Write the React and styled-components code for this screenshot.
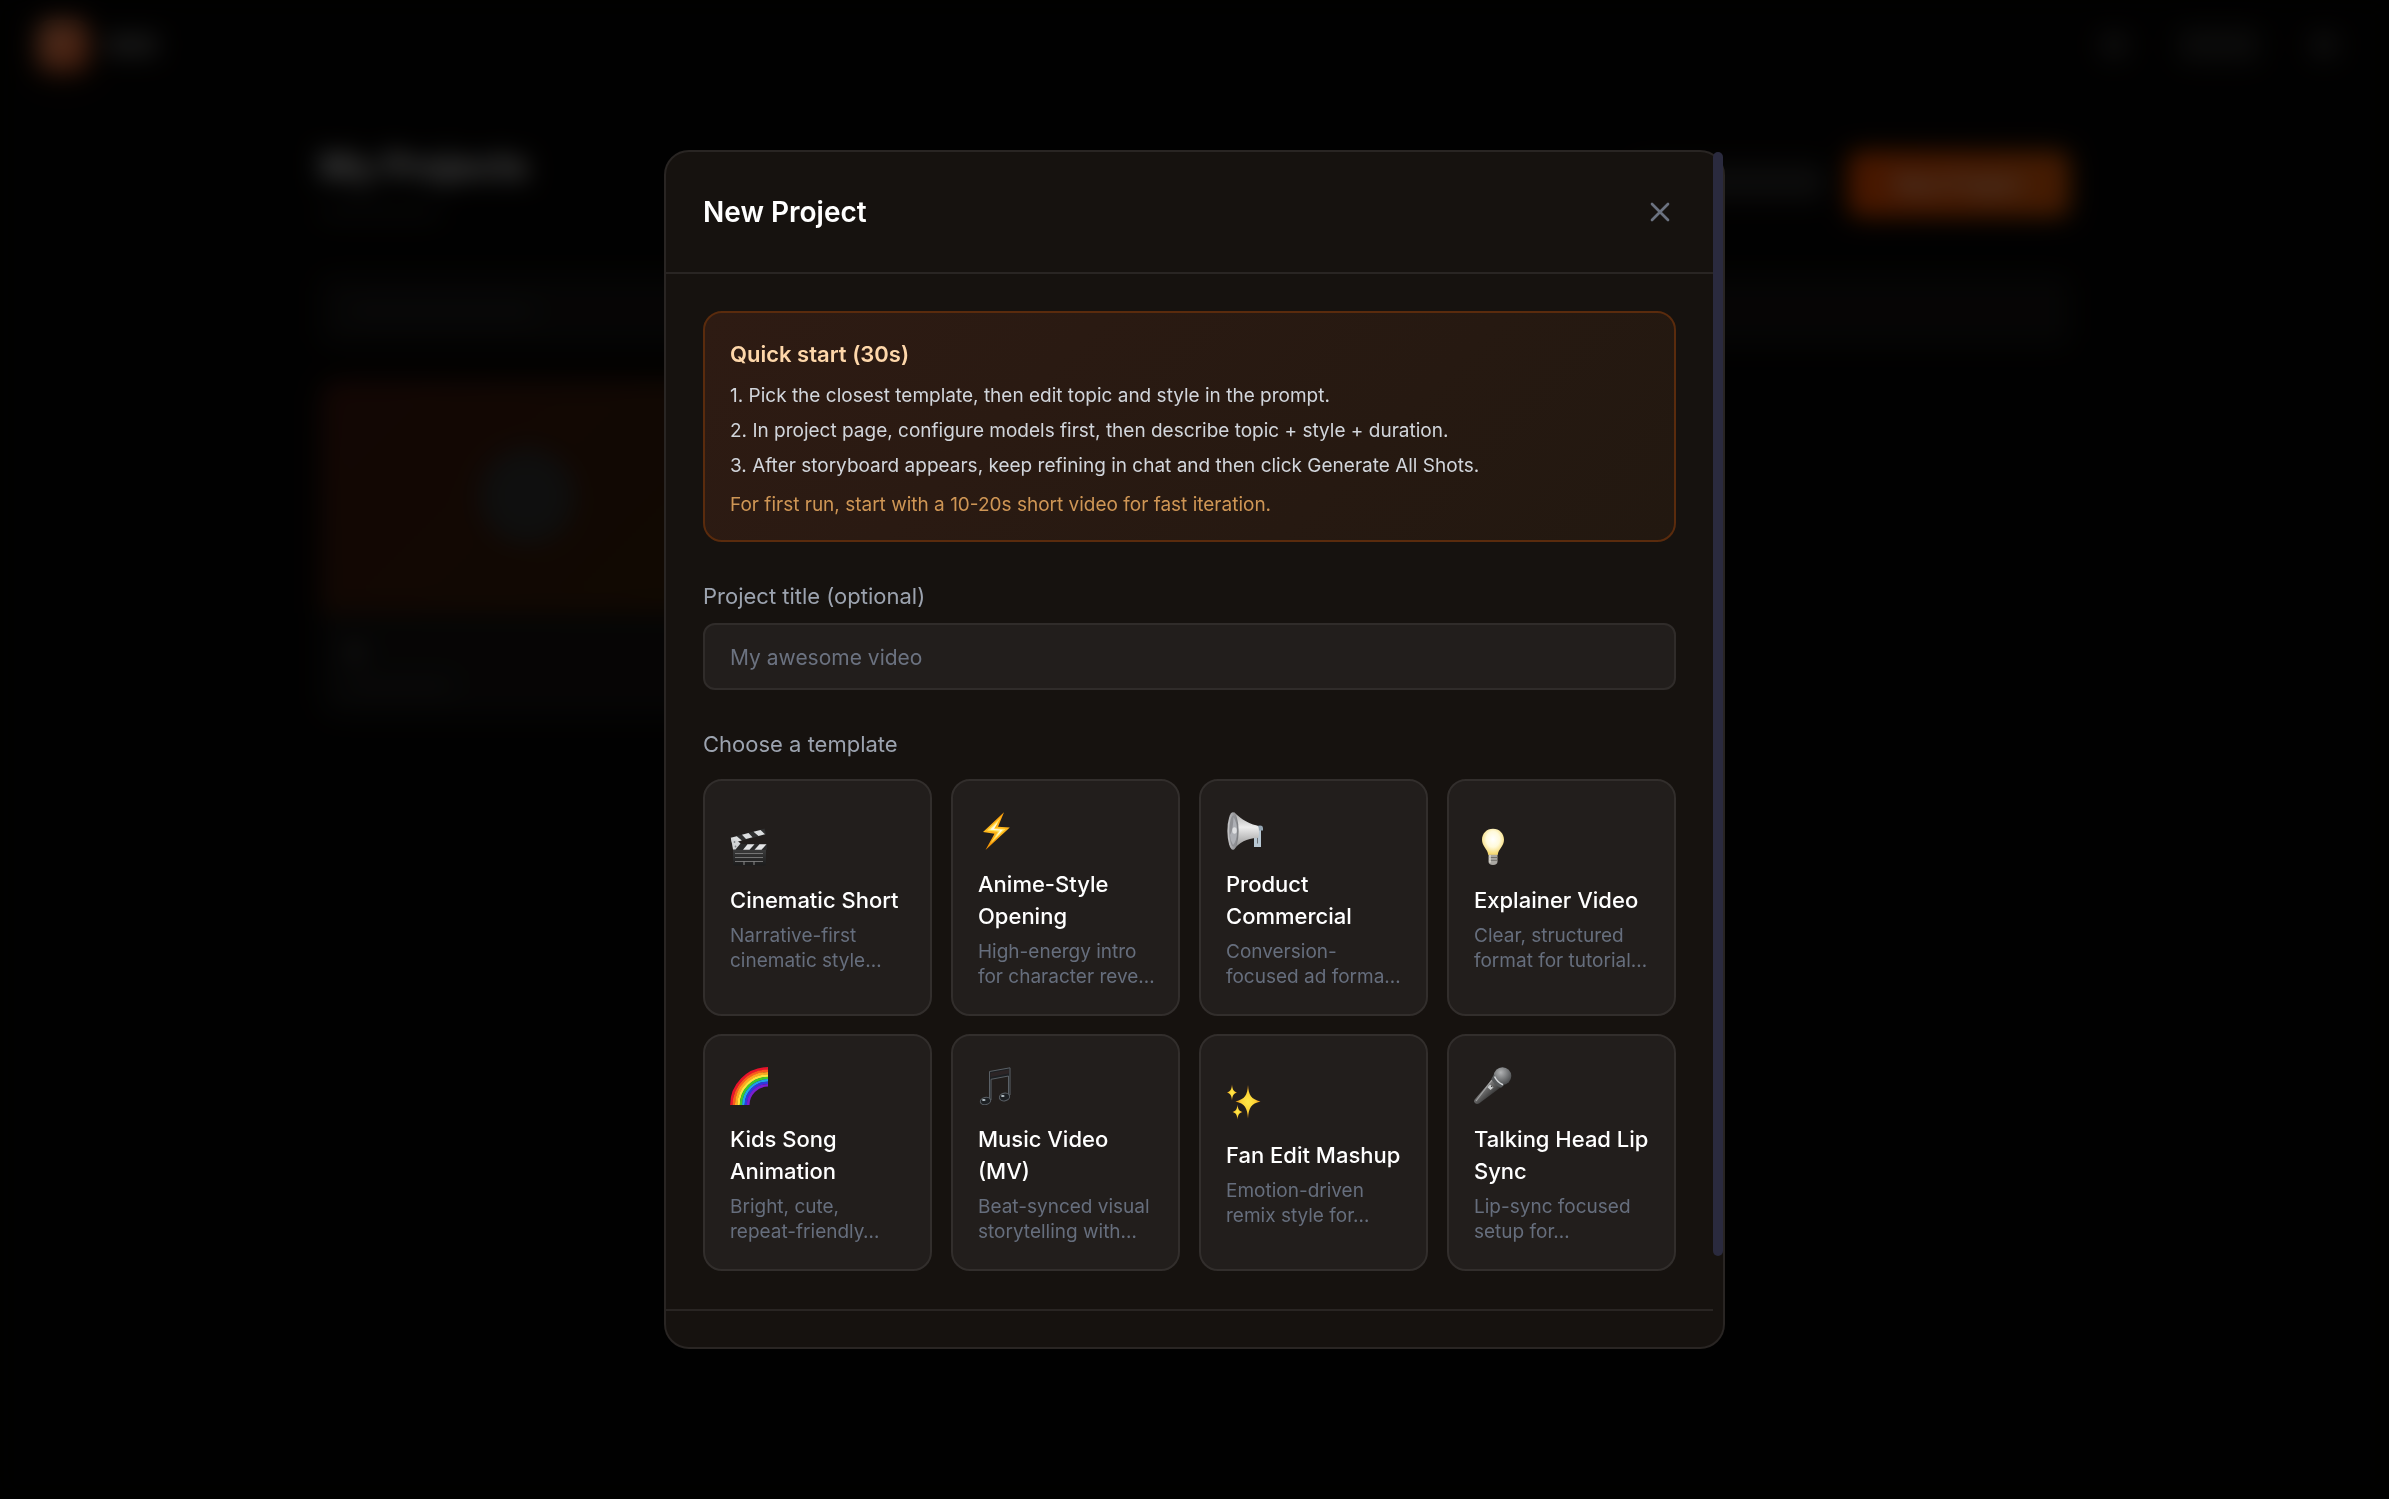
import React, { useState } from "react";
import styled, { createGlobalStyle } from "styled-components";

const GlobalStyle = createGlobalStyle`
  * { box-sizing: border-box; }
  html, body { margin: 0; height: 100%; background: #0c0a09; overflow: hidden; }
  body, button, input { font-family: Inter, "Liberation Sans", sans-serif; }
  h1, h2, h3, p, ol { margin: 0; padding: 0; }
`;

/* ---------- page behind the dialog ---------- */

const Page = styled.div`
  min-height: 100vh;
  background: #060504;
  color: #fff;
`;

const TopBar = styled.header`
  display: flex;
  align-items: center;
  justify-content: space-between;
  height: 90px;
  padding: 0 52px 0 38px;
`;

const Cluster = styled.div`
  display: flex;
  align-items: center;
  gap: ${(p) => p.$gap}px;
`;

const LogoMark = styled.div`
  width: 50px;
  height: 50px;
  border-radius: 12px;
  background: linear-gradient(135deg, #ff9a68, #e8602a);
  box-shadow: 0 6px 20px rgba(234, 88, 12, 0.3);
`;

const Bar = styled.div`
  width: ${(p) => p.$w}px;
  height: ${(p) => p.$h}px;
  border-radius: 8px;
  background: rgba(255, 255, 255, ${(p) => p.$a});
`;

const Main = styled.main`
  max-width: 1826px;
  margin: 0 auto;
  padding: 54px 38px;
`;

const TitleRow = styled.div`
  display: flex;
  align-items: center;
  justify-content: space-between;
  margin-bottom: 56px;
`;

const TitleBlock = styled.div`
  display: flex;
  flex-direction: column;
  gap: 16px;
`;

const PageTitle = styled.h1`
  font-size: 36px;
  line-height: 44px;
  font-weight: 700;
`;

const PrimaryAction = styled.button`
  height: 66px;
  width: 222px;
  margin-top: 4px;
  border: 0;
  border-radius: 12px;
  background: linear-gradient(90deg, #f04e00, #e25c08);
  color: #fff;
  font-size: 22px;
  font-weight: 500;
`;

const SearchBar = styled.div`
  display: flex;
  align-items: center;
  height: 70px;
  padding: 0 26px;
  margin-bottom: 34px;
  border-radius: 12px;
  background: rgba(255, 255, 255, 0.06);
`;

const ProjectCard = styled.article`
  width: 414px;
  border-radius: 19px;
  overflow: hidden;
  background: rgba(255, 255, 255, 0.06);
`;

const Thumb = styled.div`
  display: grid;
  place-items: center;
  aspect-ratio: 16 / 9;
  background: linear-gradient(135deg, #3f170f, #382007);
`;

const PlayBadge = styled.div`
  width: 96px;
  height: 96px;
  border-radius: 50%;
  background: rgba(50, 54, 54, 0.9);
`;

const CardMeta = styled.div`
  display: flex;
  flex-direction: column;
  gap: 14px;
  padding: 28px 25px 22px;
`;

/* ---------- dialog ---------- */

const Overlay = styled.div`
  position: fixed;
  inset: 0;
  display: flex;
  align-items: center;
  justify-content: center;
  padding: 25px;
  background: rgba(0, 0, 0, 0.7);
  backdrop-filter: blur(12px);
`;

const Dialog = styled.section`
  display: flex;
  width: 100%;
  max-width: 1061px;
  max-height: 80vh;
  border: 2px solid #292523;
  border-radius: 25px;
  background: #16120f;
  color: #fff;
`;

const ScrollArea = styled.div`
  flex: 1;
  min-width: 0;
  overflow-y: auto;
  scrollbar-width: none;
  border-radius: 23px 0 0 23px;
`;

const ScrollRail = styled.div`
  flex: none;
  width: 10px;
`;

const ScrollThumb = styled.div`
  height: 92.4%;
  border-radius: 5px;
  background: #2a2a3e;
`;

const DialogHead = styled.header`
  display: flex;
  align-items: center;
  justify-content: space-between;
  height: 122px;
  padding: 0 37px;
  border-bottom: 2px solid #292523;
`;

const DialogTitle = styled.h2`
  font-size: 28px;
  line-height: 44px;
  font-weight: 600;
`;

const CloseButton = styled.button`
  display: flex;
  padding: 0;
  border: 0;
  background: none;
  color: #6b7280;
  cursor: pointer;
`;

const DialogBody = styled.div`
  display: flex;
  flex-direction: column;
  gap: 38px;
  padding: 37px 37px 38px;
`;

const QuickStart = styled.section`
  padding: 25px 25px 23px;
  border: 2px solid #5a2b0d;
  border-radius: 19px;
  background: linear-gradient(135deg, #2e1b13, #221810);
`;

const QuickTitle = styled.h3`
  margin-bottom: 8px;
  font-size: 22px;
  line-height: 32px;
  font-weight: 600;
  color: #fed7aa;
`;

const QuickList = styled.ol`
  list-style: none;
  margin-bottom: 10px;
  font-size: 19px;
  line-height: 35px;
  color: #d1d5db;
`;

const QuickTip = styled.p`
  font-size: 19px;
  line-height: 24px;
  color: #cf9655;
`;

const Field = styled.div`
  display: flex;
  flex-direction: column;
  gap: ${(p) => p.$gap}px;
`;

const Label = styled.label`
  font-size: 22px;
  line-height: 32px;
  color: #9ca3af;
`;

const TextInput = styled.input`
  width: 100%;
  height: 67px;
  padding: 2px 25px 0;
  border: 2px solid #302c2a;
  border-radius: 12px;
  outline: none;
  background: #221e1c;
  color: #fff;
  font-size: 21px;
  &::placeholder { color: #6b7280; opacity: 1; }
`;

const Grid = styled.div`
  display: grid;
  grid-template-columns: repeat(4, minmax(0, 1fr));
  gap: 18px 19px;
`;

const Card = styled.button`
  display: flex;
  flex-direction: column;
  justify-content: center;
  min-height: 237px;
  padding: 25px;
  border: 2px solid #322e2c;
  border-radius: 19px;
  background: #221e1c;
  text-align: left;
  white-space: pre;
  cursor: pointer;
`;

const CardIcon = styled.svg`
  width: 38px;
  height: 38px;
  margin: 6px 0 18px;
`;

const CardTitle = styled.span`
  margin-bottom: 7px;
  font-size: 22px;
  line-height: 32px;
  font-weight: 500;
  color: #fff;
`;

const CardText = styled.span`
  font-size: 19px;
  line-height: 25px;
  color: #666e7d;
`;

const DialogFoot = styled.footer`
  height: 138px;
  border-top: 2px solid #292523;
`;

/* ---------- icons ---------- */

const CloseIcon = () => (
  <svg width="32" height="32" viewBox="0 0 24 24" fill="none" stroke="currentColor" strokeWidth="2" strokeLinecap="round" aria-hidden="true">
    <path d="M18 6 6 18M6 6l12 12" />
  </svg>
);

const Clapper = () => (
  <CardIcon viewBox="0 0 38 38" aria-hidden="true">
    <defs>
      <linearGradient id="clapBody" x1="0" y1="0" x2="0" y2="1">
        <stop offset="0" stopColor="#3e3e3e" />
        <stop offset="1" stopColor="#1b1b1b" />
      </linearGradient>
    </defs>
    <rect x="3" y="20" width="33" height="17.500" rx="1.500" fill="url(#clapBody)" />
    <path d="M5 25.500h28M5 29.500h28M5 33.500h28" stroke="#747474" strokeWidth="1.100" />
    <path d="M14 33.500V37M24 33.500V37" stroke="#8a8a8a" strokeWidth="1" />
    <path d="M.5 9.500 34.500.5l1.500 6L2 15z" fill="#303030" />
    <path d="M.8 9.800l6-1.600 5 4.300-9.800 2.500zM12 6.800l6.500-1.700 4 4.200-6.500 1.700zM23.500 3.800l7-1.800 4.500 4.300-6.500 1.700z" fill="#dcdedf" />
    <path d="M3 16h34v5.800H3z" fill="#2a2a2a" />
    <path d="M17.500 16.200h7l-5 5.500H13zM29.500 16.200h7l-5 5.500h-7z" fill="#e3e4e5" />
    <path d="M1 10l6 2.500 3.500 3-5 6H3z" fill="#d2d4d5" />
    <circle cx="4.500" cy="14" r=".9" fill="#808486" />
    <circle cx="5.500" cy="18.500" r=".9" fill="#808486" />
  </CardIcon>
);

const Bolt = () => (
  <CardIcon viewBox="0 0 38 38" aria-hidden="true">
    <defs>
      <linearGradient id="boltEdge" x1="0" y1="0" x2="0" y2="1">
        <stop offset="0" stopColor="#ff9f0a" />
        <stop offset=".5" stopColor="#ffb81c" />
        <stop offset="1" stopColor="#f08c00" />
      </linearGradient>
    </defs>
    <path d="M26 .3 5 20l11.500 1.800L7.500 38 31.800 15.500 20 14.800z" fill="url(#boltEdge)" />
    <path d="M22.800 5.500 9 18.500l11 1.300-7.300 11.500L27.500 17l-11-.7z" fill="#ffe45c" />
    <path d="M20 10 12 17.800l10 .8-4.500 7 7.500-7.800-9-.8z" fill="#fffbe0" />
  </CardIcon>
);

const Megaphone = () => (
  <CardIcon viewBox="0 0 38 38" aria-hidden="true">
    <defs>
      <linearGradient id="hornBody" x1="0" y1="0" x2="0" y2="1">
        <stop offset="0" stopColor="#a9a9a9" />
        <stop offset=".4" stopColor="#ededed" />
        <stop offset="1" stopColor="#8b8b8b" />
      </linearGradient>
      <linearGradient id="hornMouth" x1="0" y1="0" x2="1" y2="0">
        <stop offset="0" stopColor="#c9c9cb" />
        <stop offset="1" stopColor="#77787c" />
      </linearGradient>
    </defs>
    <path d="M28 24.500v10.500h7V17h-3.500v14.500H31V24" fill="#b9c8d4" />
    <path d="M29.500 14.500q7-2.500 7.500 1v3h-7z" fill="#94a5b2" />
    <path d="M8 .3C12 4 20 11.500 31 13.500q2 0 2 6.500t-2 6c-10 0-18 5-23.500 11.500z" fill="url(#hornBody)" />
    <ellipse cx="7" cy="19" rx="5.600" ry="18.700" fill="url(#hornMouth)" />
    <ellipse cx="7.300" cy="19" rx="4" ry="15.500" fill="#8f9094" />
    <path d="M7.500 5q3.800 6 3.500 15t-4 13q-3-5-3-10 3-4 3.500-18z" fill="#aeb0b5" />
    <ellipse cx="8.500" cy="18.500" rx="2.200" ry="3.200" fill="#dfe0e2" />
  </CardIcon>
);

const Bulb = () => (
  <CardIcon viewBox="0 0 38 38" aria-hidden="true">
    <defs>
      <radialGradient id="bulbGlow" cx=".5" cy=".4" r=".6">
        <stop offset="0" stopColor="#ffffff" />
        <stop offset=".5" stopColor="#fffadb" />
        <stop offset="1" stopColor="#f5d565" />
      </radialGradient>
    </defs>
    <path d="M19 .8C12.500.8 8 5.600 8 11.800c0 6.500 5.500 9 6.300 15.200h9.400C24.500 20.800 30 18.300 30 11.800 30 5.600 25.500.8 19 .8z" fill="url(#bulbGlow)" />
    <path d="M14.500 26.800h9v7q0 3-4.500 3.200-4.500-.2-4.500-3.200z" fill="#aaa8a2" />
    <path d="M14.500 29.500h9M14.500 32.300h9" stroke="#716f69" strokeWidth="1" />
    <path d="M16 27v7.500" stroke="#dddad2" strokeWidth="1.500" />
  </CardIcon>
);

const rainbowBands = ["#e8132b", "#fb5a1d", "#ffa51f", "#ffe23a", "#3fc92b", "#1fa4e8", "#3038e0", "#7a1fd0"];
const Rainbow = () => (
  <CardIcon viewBox="0 0 38 38" aria-hidden="true">
    {rainbowBands.map((color, i) => {
      const r = 36.6 - i * 2.4;
      return <path key={color} d={`M${38 - r} 38A${r} ${r} 0 0 1 38 ${38 - r}`} fill="none" stroke={color} strokeWidth="2.600" />;
    })}
  </CardIcon>
);

const Notes = () => (
  <CardIcon viewBox="0 0 38 38" aria-hidden="true">
    <g fill="#1d2023" stroke="#5a6066" strokeWidth="1">
      <path d="M11.500 4.500 32 .8V28h-1.500V9L13 12.300V33h-1.500z" />
      <ellipse cx="7.500" cy="34" rx="5.200" ry="3.600" transform="rotate(-12 7.500 34)" />
      <ellipse cx="26.500" cy="30" rx="5.200" ry="3.800" transform="rotate(-12 26.500 30)" />
    </g>
    <path d="M12.500 6 31 2.500v4L12.500 10z" fill="#2c2425" />
    <ellipse cx="5.800" cy="33" rx="1.800" ry="1" fill="#b9c3c9" />
    <ellipse cx="24.800" cy="29" rx="1.800" ry="1" fill="#b9c3c9" />
  </CardIcon>
);

const Sparkles = () => (
  <CardIcon viewBox="0 0 38 38" aria-hidden="true">
    <defs>
      <radialGradient id="sparkFill">
        <stop offset="0" stopColor="#ffe94a" />
        <stop offset=".55" stopColor="#fdd335" />
        <stop offset="1" stopColor="#e58a14" />
      </radialGradient>
    </defs>
    <g fill="url(#sparkFill)">
      <path d="M22 2c.8 10.500 3 14 12.500 16.500-9.500 2.300-11.700 6-12.500 17-.8-11-3-14.700-12.500-17 9.500-2.500 11.700-6 12.500-16.500z" />
      <path d="M6 1.500c.5 5 1.500 7 5 8-3.500 1-4.500 3-5 8-.5-5-1.500-7-5-8 3.500-1 4.500-3 5-8z" />
      <path d="M11.500 21.500c.5 4.800 1.500 6.500 5 7.500-3.500 1-4.500 2.700-5 7.500-.5-4.800-1.500-6.500-5-7.500 3.500-1 4.500-2.700 5-7.500z" />
    </g>
  </CardIcon>
);

const Microphone = () => (
  <CardIcon viewBox="0 0 38 38" aria-hidden="true">
    <defs>
      <linearGradient id="micHandle" x1="0" y1="0" x2="1" y2="1">
        <stop offset=".3" stopColor="#8b8b8b" />
        <stop offset=".7" stopColor="#2f2f2f" />
      </linearGradient>
      <radialGradient id="micHead" cx=".4" cy=".3" r=".7">
        <stop offset="0" stopColor="#b0b2b3" />
        <stop offset="1" stopColor="#4a4c4e" />
      </radialGradient>
    </defs>
    <path d="M18 12.500 26.500 20.500 5 36.500q-2.500 1-4-.5t-.3-3.500z" fill="url(#micHandle)" />
    <path d="M18 12.800 2 34" stroke="#a0a0a0" strokeWidth="1.200" />
    <circle cx="28.500" cy="9" r="8.800" fill="url(#micHead)" />
    <path d="M20 7.500q2 7 10.500 10.300l-3.500 3q-8-3-9.500-9.300z" fill="#55585a" />
    <path d="M20.500 9.500q2.500 5.500 8.500 8.300" stroke="#d5d8da" strokeWidth="1.600" fill="none" />
    <path d="M16 17.500l3.500 3-3 2.500-3-2.800z" fill="#c9cccd" />
    <path d="M17 19l1.300 1.100" stroke="#333" strokeWidth="1" />
  </CardIcon>
);

/* ---------- data ---------- */

const steps = [
  "1. Pick the closest template, then edit topic and style in the prompt.",
  "2. In project page, configure models first, then describe topic + style + duration.",
  "3. After storyboard appears, keep refining in chat and then click Generate All Shots.",
];

const templates = [
  { Icon: Clapper, title: "Cinematic Short", text: "Narrative-first\ncinematic style…" },
  { Icon: Bolt, title: "Anime-Style\nOpening", text: "High-energy intro\nfor character reve…" },
  { Icon: Megaphone, title: "Product\nCommercial", text: "Conversion-\nfocused ad forma…" },
  { Icon: Bulb, title: "Explainer Video", text: "Clear, structured\nformat for tutorial…" },
  { Icon: Rainbow, title: "Kids Song\nAnimation", text: "Bright, cute,\nrepeat-friendly…" },
  { Icon: Notes, title: "Music Video\n(MV)", text: "Beat-synced visual\nstorytelling with…" },
  { Icon: Sparkles, title: "Fan Edit Mashup", text: "Emotion-driven\nremix style for…" },
  { Icon: Microphone, title: "Talking Head Lip\nSync", text: "Lip-sync focused\nsetup for…" },
];

function ProjectsPage() {
  return (
    <Page aria-hidden="true">
      <TopBar>
        <Cluster $gap={16}>
          <LogoMark />
          <Bar $w={54} $h={22} $a={0.3} />
        </Cluster>
        <Cluster $gap={52}>
          <Bar $w={26} $h={26} $a={0.18} />
          <Bar $w={80} $h={34} $a={0.13} />
          <Bar $w={26} $h={26} $a={0.18} />
        </Cluster>
      </TopBar>
      <Main>
        <TitleRow>
          <TitleBlock>
            <PageTitle>My Projects</PageTitle>
            <Bar $w={120} $h={16} $a={0.08} />
          </TitleBlock>
          <Cluster $gap={24}>
            <Bar $w={190} $h={36} $a={0.14} />
            <PrimaryAction type="button" tabIndex={-1}>New Project</PrimaryAction>
          </Cluster>
        </TitleRow>
        <SearchBar>
          <Bar $w={190} $h={18} $a={0.06} />
        </SearchBar>
        <ProjectCard>
          <Thumb>
            <PlayBadge />
          </Thumb>
          <CardMeta>
            <Bar $w={20} $h={22} $a={0.15} />
            <Bar $w={110} $h={18} $a={0.06} />
          </CardMeta>
        </ProjectCard>
      </Main>
    </Page>
  );
}

export default function App() {
  const [title, setTitle] = useState("");
  return (
    <>
      <GlobalStyle />
      <ProjectsPage />
      <Overlay>
        <Dialog role="dialog" aria-modal="true" aria-labelledby="dialog-title">
          <ScrollArea>
            <DialogHead>
              <DialogTitle id="dialog-title">New Project</DialogTitle>
              <CloseButton type="button" aria-label="Close">
                <CloseIcon />
              </CloseButton>
            </DialogHead>
            <DialogBody>
              <QuickStart>
                <QuickTitle>Quick start (30s)</QuickTitle>
                <QuickList>
                  {steps.map((step) => (
                    <li key={step}>{step}</li>
                  ))}
                </QuickList>
                <QuickTip>For first run, start with a 10-20s short video for fast iteration.</QuickTip>
              </QuickStart>
              <Field $gap={11}>
                <Label htmlFor="project-title">Project title (optional)</Label>
                <TextInput
                  id="project-title"
                  placeholder="My awesome video"
                  value={title}
                  onChange={(e) => setTitle(e.target.value)}
                />
              </Field>
              <Field $gap={19}>
                <Label as="span" id="template-label">Choose a template</Label>
                <Grid role="group" aria-labelledby="template-label">
                  {templates.map(({ Icon, title: name, text }) => (
                    <Card key={name} type="button">
                      <Icon />
                      <CardTitle>{name}</CardTitle>
                      <CardText>{text}</CardText>
                    </Card>
                  ))}
                </Grid>
              </Field>
            </DialogBody>
            <DialogFoot />
          </ScrollArea>
          <ScrollRail>
            <ScrollThumb />
          </ScrollRail>
        </Dialog>
      </Overlay>
    </>
  );
}
